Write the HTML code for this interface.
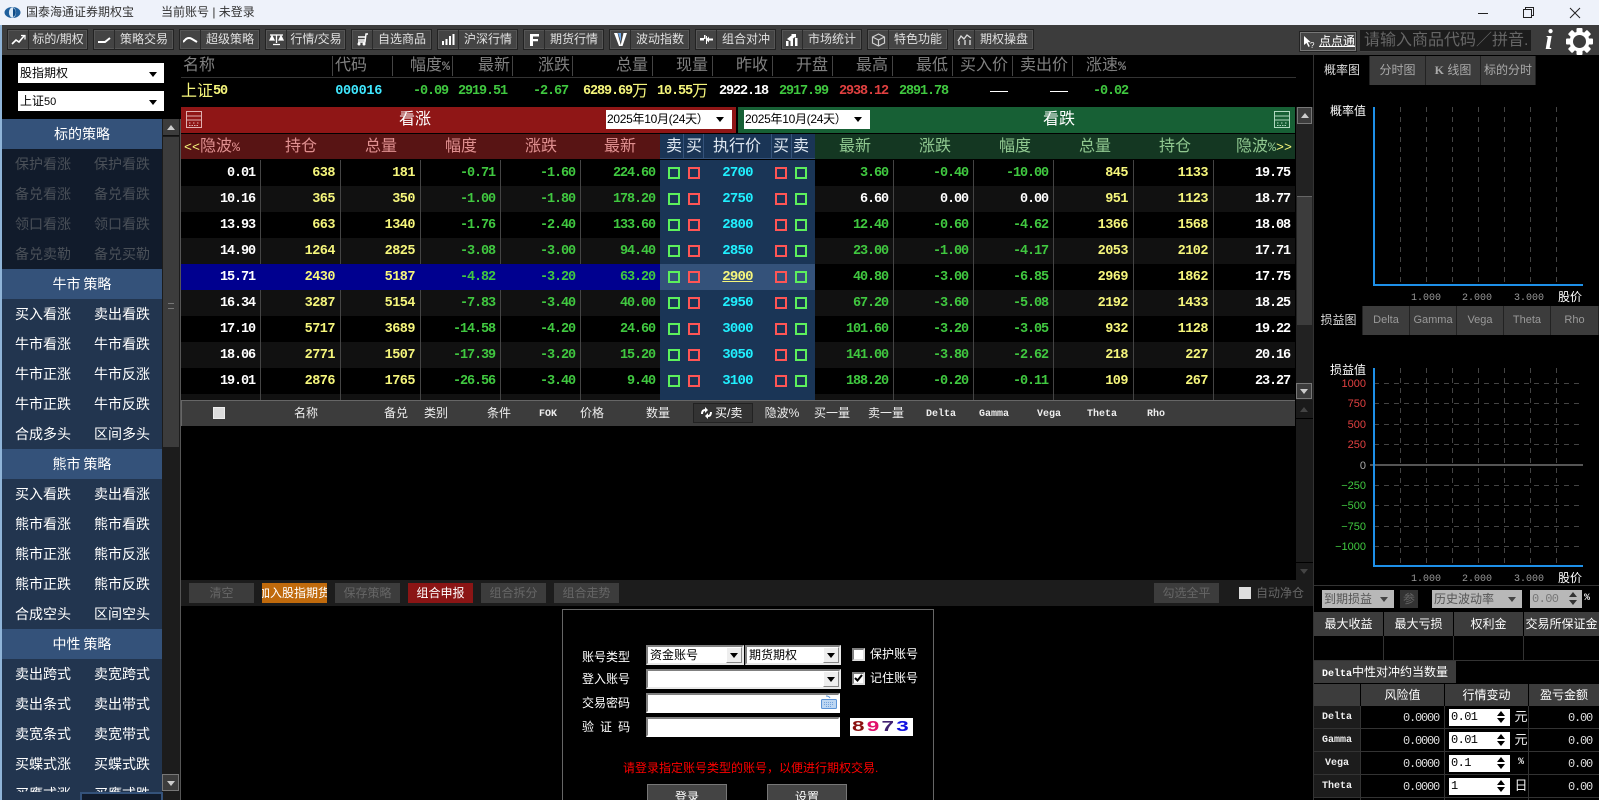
<!DOCTYPE html>
<html lang="zh"><head><meta charset="utf-8"><title>国泰海通证券期权宝</title>
<style>
html,body{margin:0;padding:0;background:#000;overflow:hidden;width:1599px;height:800px}
#w{position:relative;width:1599px;height:800px;overflow:hidden;font-family:"Liberation Sans","WenQuanYi Zen Hei","Noto Sans CJK SC",sans-serif;font-size:12px;color:#fff;background:#000}
div,span,i,b,em{box-sizing:border-box}
.a{position:absolute;white-space:nowrap}
.mo{font-family:"Liberation Mono",monospace}
.tb{position:absolute;top:29px;width:81px;height:21px;background:#444;border:1px solid #222;box-shadow:inset 0 0 0 1px #555}
.tb svg{position:absolute;left:3px;top:3px}
.tb span{position:absolute;left:20px;right:0;top:0;height:19px;line-height:19px;text-align:center;color:#e0e0e0;border-left:1px solid #2a2a2a;font-size:12px;white-space:nowrap}
.sel{position:absolute;background:#fff;color:#000;line-height:20px;padding-left:2px;overflow:hidden;white-space:nowrap;font-size:12px}
.tri{position:absolute;width:0;height:0;border-left:4.5px solid transparent;border-right:4.5px solid transparent;border-top:5px solid #000}
.h{position:absolute;left:2px;width:160px;height:30px;background:#34527a;text-align:center;line-height:30px;font-size:14px;color:#fff;word-spacing:-1px}
.l{position:absolute;left:2px;width:160px;height:30px;background:#22354f;line-height:30px;color:#fff;font-size:14px;overflow:hidden}
.l.d{background:#111b2b;color:#4a5058}
.l span{position:absolute;top:0}
.l span:first-child{left:13px}.l span:last-child{left:92px}
.q{position:absolute;top:56px;color:#808080;font-size:16px;line-height:20px;white-space:nowrap}
.q b{font:bold 13.3px/20px "Liberation Mono",monospace}
.v{position:absolute;top:82px;height:20px;display:flex;align-items:center;font:bold 13.5px/20px "Liberation Mono",monospace;letter-spacing:-1.1px;white-space:nowrap}
.v u{font:16px/16px "Liberation Sans","WenQuanYi Zen Hei",sans-serif;text-decoration:none;letter-spacing:0}
.sp{position:absolute;top:56px;width:1px;height:20px;background:#444}
.gr{color:#40c840}.ye{color:#f6f67c}.wh{color:#fff}.cy{color:#40e8ff}.rd{color:#e04040}
.ch{position:absolute;top:134px;height:25px;line-height:25px;font-size:16px;white-space:nowrap}
.ch .mo{font-size:13.3px}
.row{position:absolute;left:181px;width:1114px;height:26px;display:flex;background:#000}
.row.o{background:#111}
.row span{display:block;flex:none;width:80px;height:26px;text-align:right;padding-right:5px;border-right:1px solid #444;font:bold 13.5px/27px "Liberation Mono",monospace;letter-spacing:-1.1px;color:#40c840;white-space:nowrap}
.row span:nth-child(1),.row span:nth-child(13){color:#fff}
.row span:nth-child(2),.row span:nth-child(3),.row span:nth-child(11),.row span:nth-child(12){color:#f6f67c;letter-spacing:-.5px}
.row span:nth-child(6){width:79px;border-right:0}
.row span:nth-child(7){width:155px;border:0;padding:0;position:relative;background:#1a3556;text-align:center;color:#20f0ff;font-size:14px;letter-spacing:-.8px}
.row span:nth-child(8){width:79px}
.row span:nth-child(13){width:81px;border-right:0}
.row.s span:nth-child(-n+6){background:#00008f;border-color:#00008f}
.row.s span:nth-child(7){background:#34527a;color:#f6f67c}
.row.s span:nth-child(7) em{text-decoration:underline}
.row em{font-style:normal}
.row i{position:absolute;top:7px;width:12px;height:12px;border:2px solid #5cf05c}
.row i.r{border-color:#ff5555}
.pl{position:absolute;top:403px;height:20px;line-height:20px;font-size:12px;color:#eee;white-space:nowrap;transform:translateX(-50%)}
.pl.m{font:10px/24px "Liberation Mono",monospace;font-weight:bold}
.btn{position:absolute;top:583px;width:65px;height:20px;background:#3c3c3c;color:#666;text-align:center;line-height:20px;font-size:12px;overflow:hidden;white-space:nowrap}
.lb{position:absolute;left:582px;line-height:20px;font-size:12px;white-space:nowrap;color:#fff}
.ws{position:absolute;background:#fff;border:2px solid #e8e8e8;border-top-color:#808080;border-left-color:#808080;color:#000;line-height:16px;padding-left:2px;white-space:nowrap;font-size:12px}
.dd{position:absolute;right:0;top:0;width:16px;height:16px;background:#eee;border:1px solid #888;border-top-color:#fff;border-left-color:#fff}
.dd::after{content:"";position:absolute;left:3px;top:5px;border-left:4px solid transparent;border-right:4px solid transparent;border-top:5px solid #000}
.cb{position:absolute;width:13px;height:13px;background:#fff;border:2px solid #808080;border-right-color:#ddd;border-bottom-color:#ddd}
.tab{position:absolute;height:29px;background:#3c3c3c;border-right:1px solid #222;color:#aaa;text-align:center;line-height:29px;font-size:12px;white-space:nowrap}
.tab.e{font-size:11px;color:#999}
.cell{position:absolute;background:#3c3c3c;text-align:center;color:#fff;font-size:12px;white-space:nowrap;overflow:hidden}
.rl{position:absolute;left:1314px;width:46px;height:22px;background:#1c1c1c;color:#eee;text-align:center;font:10px/24px "Liberation Mono",monospace;font-weight:bold}
.nm{position:absolute;text-align:right;font:12px/24px "Liberation Mono",monospace;letter-spacing:-1.2px;color:#ddd}
.in{position:absolute;left:1449px;width:61px;height:17px;background:#fff;color:#000;font:12px/17px "Liberation Mono",monospace;padding-left:2px;letter-spacing:-.6px}
.in::before{content:"";position:absolute;right:5px;top:2px;border-left:4px solid transparent;border-right:4px solid transparent;border-bottom:5px solid #000}
.in::after{content:"";position:absolute;right:5px;top:9px;border-left:4px solid transparent;border-right:4px solid transparent;border-top:5px solid #000}
.un{position:absolute;left:1514px;width:14px;text-align:center;font-size:13px;line-height:22px;color:#eee}
svg.o{position:absolute;left:0;top:0}
</style></head><body><div id="w">

<!-- title bar -->
<div class="a" style="left:0;top:0;width:1599px;height:25px;background:#eef2fa"></div>
<svg class="a" style="left:4px;top:6px" width="17" height="13" viewBox="0 0 17 13"><ellipse cx="8.5" cy="6.5" rx="8" ry="5.5" fill="#1f5f9c"/><ellipse cx="8.5" cy="6.5" rx="3.6" ry="5.2" fill="#dbe9f6"/><path d="M9 2 a5 5 0 0 1 0 9z" fill="#0d4a86"/></svg>
<div class="a" style="left:26px;top:4px;font-size:12px;line-height:17px;color:#333">国泰海通证券期权宝</div>
<div class="a" style="left:161px;top:4px;font-size:12px;line-height:17px;color:#333">当前账号 | 未登录</div>
<svg class="a" style="left:1478px;top:6px" width="110" height="14" viewBox="0 0 110 14" fill="none" stroke="#222" stroke-width="1"><path d="M0 7.5h10"/><path d="M45.5 3.5h8v8h-8zM47.5 3.500v-2h8v8h-2"/><path d="M92 2l10 10M102 2l-10 10"/></svg>

<!-- toolbar -->
<div class="a" style="left:0;top:25px;width:1599px;height:30px;background:#3c3c3c"></div>
<div class="tb" style="left:7px"><svg width="15" height="13" viewBox="0 0 15 13" fill="none" stroke="#fff" stroke-width="1.6"><path d="M1 11l4-4 3 2 5-6"/><path d="M10 2.500h4v4" stroke-width="1.2"/></svg><span>标的/期权</span></div>
<div class="tb" style="left:93px"><svg width="15" height="13" viewBox="0 0 15 13" fill="none" stroke="#fff" stroke-width="2"><path d="M1 9h7l5-4"/></svg><span>策略交易</span></div>
<div class="tb" style="left:179px"><svg width="15" height="13" viewBox="0 0 15 13" fill="none" stroke="#fff" stroke-width="2"><path d="M0 9l3-3q3-2 6 0l5 3"/></svg><span>超级策略</span></div>
<div class="tb" style="left:265px"><svg width="15" height="13" viewBox="0 0 15 13" fill="none" stroke="#fff" stroke-width="1.3"><path d="M1 2h13M7.500 2v8M4 11.500h7"/><path d="M1 7l2-4 2 4zM10 7l2-4 2 4z" fill="#fff"/></svg><span>行情/交易</span></div>
<div class="tb" style="left:351px"><svg width="15" height="13" viewBox="0 0 15 13" fill="none" stroke="#fff" stroke-width="1.4"><path d="M13 1h-2l-1 8H3M3 4h7M3 7h7"/><circle cx="4" cy="11" r=".8"/><circle cx="9" cy="11" r=".8"/></svg><span>自选商品</span></div>
<div class="tb" style="left:437px"><svg width="15" height="13" viewBox="0 0 15 13" fill="#fff"><rect x="1" y="8" width="2" height="4"/><rect x="4.500" y="6" width="2" height="6"/><rect x="8" y="3" width="2" height="9"/><rect x="11.500" y="1" width="2" height="11"/></svg><span>沪深行情</span></div>
<div class="tb" style="left:523px"><svg width="15" height="13" viewBox="0 0 15 13" fill="#fff"><path d="M3 1h9v2.500H6v2.500h5v2.300H6V13H3z"/></svg><span>期货行情</span></div>
<div class="tb" style="left:609px"><svg width="15" height="13" viewBox="0 0 15 13"><path d="M1 0h4l3 9V0z" fill="#6fa8e8"/><path d="M14 0h-3.500L7.500 13h2z" fill="#fff"/><path d="M1 0h3.500L8 13H6z" fill="#fff"/></svg><span>波动指数</span></div>
<div class="tb" style="left:695px"><svg width="15" height="13" viewBox="0 0 15 13" fill="#fff"><path d="M1 5h4V2h1.500v4H5v1.500H1zM7 6.500l3-3v2h4v2h-4v2z"/><rect x="7" y="3" width="1" height="8"/></svg><span>组合对冲</span></div>
<div class="tb" style="left:781px"><svg width="15" height="13" viewBox="0 0 15 13" fill="#fff"><rect x="1" y="8" width="2.500" height="5"/><rect x="5.500" y="6" width="2.500" height="7"/><rect x="10" y="5" width="2.500" height="8"/><path d="M2 6l5-4-1-1h5v4l-1-1-5 4z"/></svg><span>市场统计</span></div>
<div class="tb" style="left:867px"><svg width="15" height="14" viewBox="0 0 15 14" fill="none" stroke="#cfcfcf" stroke-width="1.200"><path d="M7.500 1l6 3v6l-6 3-6-3V4zM1.500 4l6 3 6-3M7.500 7v6"/></svg><span>特色功能</span></div>
<div class="tb" style="left:953px"><svg width="15" height="13" viewBox="0 0 15 13" fill="none" stroke="#ddd" stroke-width="1.300"><path d="M1 8l3-5 3 3 3-4 4 3M2 12V8M8 12V7M13 12V7"/></svg><span>期权操盘</span></div>

<div class="a" style="left:1299px;top:31px;width:58px;height:21px;background:#444;border:1px solid #222;box-shadow:inset 0 0 0 1px #777;line-height:19px;font-size:12px;color:#fff;padding-left:19px"><u>点点通</u></div>
<svg class="a" style="left:1303px;top:35px" width="13" height="14" viewBox="0 0 13 14"><path d="M1 1v9l2.500-2 2 4 1.300-.7-2-4h3z" fill="#fff"/><text x="7" y="13" font-size="8" fill="#fff" font-family="Liberation Sans">?</text></svg>
<div class="a" style="left:1360px;top:30px;width:171px;height:22px;background:#1c1c1c;border-bottom:1px solid #444;color:#666;font-size:16px;line-height:22px;padding-left:4px;overflow:hidden">请输入商品代码／拼音.</div>
<div class="a" style="left:1545px;top:27px;font:italic bold 28px/28px 'Liberation Serif',serif;color:#fff">i</div>
<svg class="a" style="left:1565px;top:27px" width="29" height="29" viewBox="0 0 29 29"><g fill="#fff"><circle cx="14.500" cy="14.500" r="10"/><rect x="11.500" y="1" width="6" height="27" rx="1"/><rect x="11.500" y="1" width="6" height="27" rx="1" transform="rotate(45 14.500 14.500)"/><rect x="11.500" y="1" width="6" height="27" rx="1" transform="rotate(90 14.500 14.500)"/><rect x="11.500" y="1" width="6" height="27" rx="1" transform="rotate(135 14.500 14.500)"/></g><circle cx="14.500" cy="14.500" r="6.500" fill="#3c3c3c"/></svg>

<!-- left border & selects -->
<div class="a" style="left:0;top:25px;width:2px;height:775px;background:#8fb4d8"></div>
<div class="sel" style="left:18px;top:63px;width:146px;height:20px">股指期权<i class="tri" style="right:7px;top:9px"></i></div>
<div class="sel" style="left:18px;top:91px;width:146px;height:20px">上证<span style="font-size:11px">50</span><i class="tri" style="right:7px;top:9px"></i></div>

<!-- strategy list -->
<div class="h" style="top:119px">标的策略</div>
<div class="l d" style="top:149px"><span>保护看涨</span><span>保护看跌</span></div>
<div class="l d" style="top:179px"><span>备兑看涨</span><span>备兑看跌</span></div>
<div class="l d" style="top:209px"><span>领口看涨</span><span>领口看跌</span></div>
<div class="l d" style="top:239px"><span>备兑卖勒</span><span>备兑买勒</span></div>
<div class="h" style="top:269px">牛市 策略</div>
<div class="l" style="top:299px"><span>买入看涨</span><span>卖出看跌</span></div>
<div class="l" style="top:329px"><span>牛市看涨</span><span>牛市看跌</span></div>
<div class="l" style="top:359px"><span>牛市正涨</span><span>牛市反涨</span></div>
<div class="l" style="top:389px"><span>牛市正跌</span><span>牛市反跌</span></div>
<div class="l" style="top:419px"><span>合成多头</span><span>区间多头</span></div>
<div class="h" style="top:449px">熊市 策略</div>
<div class="l" style="top:479px"><span>买入看跌</span><span>卖出看涨</span></div>
<div class="l" style="top:509px"><span>熊市看涨</span><span>熊市看跌</span></div>
<div class="l" style="top:539px"><span>熊市正涨</span><span>熊市反涨</span></div>
<div class="l" style="top:569px"><span>熊市正跌</span><span>熊市反跌</span></div>
<div class="l" style="top:599px"><span>合成空头</span><span>区间空头</span></div>
<div class="h" style="top:629px">中性 策略</div>
<div class="l" style="top:659px"><span>卖出跨式</span><span>卖宽跨式</span></div>
<div class="l" style="top:689px"><span>卖出条式</span><span>卖出带式</span></div>
<div class="l" style="top:719px"><span>卖宽条式</span><span>卖宽带式</span></div>
<div class="l" style="top:749px"><span>买蝶式涨</span><span>买蝶式跌</span></div>
<div class="l" style="top:779px;height:13px"><span>买鹰式涨</span><span>买鹰式跌</span></div>
<div class="a" style="left:2px;top:792px;width:160px;height:8px;background:#22354f"></div>

<!-- left scrollbar -->
<div class="a" style="left:162px;top:119px;width:19px;height:681px;background:#1c1c1c;border-right:1px solid #555"></div>
<div class="a" style="left:163px;top:119px;width:16px;height:17px;background:#3c3c3c;border-bottom:1px solid #111"></div>
<i class="a" style="left:167px;top:125px;border-left:4px solid transparent;border-right:4px solid transparent;border-bottom:5px solid #ccc"></i>
<div class="a" style="left:163px;top:137px;width:16px;height:310px;background:#3c3c3c"></div>
<div class="a" style="left:168px;top:303px;width:6px;height:6px;border-top:1px solid #777;border-bottom:1px solid #777"></div>
<div class="a" style="left:162px;top:774px;width:17px;height:17px;background:#3c3c3c;border:1px solid #777"></div>
<i class="a" style="left:167px;top:781px;border-left:4px solid transparent;border-right:4px solid transparent;border-top:5px solid #ccc"></i>
<div class="a" style="left:80px;top:792px;width:83px;height:8px;background:#111b2b;border:2px solid #34527a;border-bottom:0"></div>

<!-- quote header -->
<div class="a" style="left:181px;top:77px;width:1115px;height:1px;background:#333"></div>
<div class="q" style="left:183px">名称</div>
<div class="q" style="left:335px">代码</div>
<div class="q" style="right:1149px">幅度<b>%</b></div>
<div class="q" style="right:1089px">最新</div>
<div class="q" style="right:1029px">涨跌</div>
<div class="q" style="right:951px">总量</div>
<div class="q" style="right:891px">现量</div>
<div class="q" style="right:831px">昨收</div>
<div class="q" style="right:771px">开盘</div>
<div class="q" style="right:711px">最高</div>
<div class="q" style="right:651px">最低</div>
<div class="q" style="right:591px">买入价</div>
<div class="q" style="right:531px">卖出价</div>
<div class="q" style="left:1086px">涨速<b>%</b></div>
<i class="sp" style="left:332px"></i><i class="sp" style="left:392px"></i><i class="sp" style="left:452px"></i><i class="sp" style="left:512px"></i><i class="sp" style="left:572px"></i><i class="sp" style="left:652px"></i><i class="sp" style="left:712px"></i><i class="sp" style="left:772px"></i><i class="sp" style="left:832px"></i><i class="sp" style="left:892px"></i><i class="sp" style="left:952px"></i><i class="sp" style="left:1012px"></i><i class="sp" style="left:1072px"></i>

<div class="v ye" style="left:181px"><u>上证</u>50</div>
<div class="v cy" style="right:1217px;letter-spacing:-.3px">000016</div>
<div class="v gr" style="right:1151px">-0.09</div>
<div class="v gr" style="right:1092px">2919.51</div>
<div class="v gr" style="right:1031px">-2.67</div>
<div class="v ye" style="right:951px">6289.69<u>万</u></div>
<div class="v ye" style="right:891px">10.55<u>万</u></div>
<div class="v wh" style="right:831px">2922.18</div>
<div class="v gr" style="right:771px">2917.99</div>
<div class="v rd" style="right:711px">2938.12</div>
<div class="v gr" style="right:651px">2891.78</div>
<div class="a" style="left:990px;top:91px;width:18px;height:1px;background:#fff"></div>
<div class="a" style="left:1050px;top:91px;width:18px;height:1px;background:#fff"></div>
<div class="v gr" style="right:471px">-0.02</div>

<!-- call / put head -->
<div class="a" style="left:181px;top:107px;width:555px;height:26px;background:#8f1616;text-align:center;line-height:26px;font-size:16px"><span style="position:absolute;left:218px">看涨</span></div>
<div class="a" style="left:738px;top:107px;width:557px;height:26px;background:#176035;line-height:26px;font-size:16px"><span style="position:absolute;left:305px">看跌</span></div>
<svg class="a" style="left:186px;top:111px" width="17" height="18" viewBox="0 0 17 18" fill="none" stroke="#e0b0b0" stroke-width="1"><rect x=".5" y=".5" width="15" height="16"/><path d="M.5 5h15M.5 9h15"/><path d="M3 12h2M7 12h2M11 12h2M3 14.500h10" stroke-dasharray="1.500 1"/></svg>
<svg class="a" style="left:1274px;top:111px" width="17" height="18" viewBox="0 0 17 18" fill="none" stroke="#b0d8c0" stroke-width="1"><rect x=".5" y=".5" width="15" height="16"/><path d="M.5 5h15M.5 9h15"/><path d="M3 12h2M7 12h2M11 12h2M3 14.500h10" stroke-dasharray="1.500 1"/></svg>
<div class="sel" style="left:606px;top:110px;width:126px;height:19px;font-size:12px;line-height:19px;padding-left:1px;letter-spacing:-.3px">2025年10月(24天）<i class="tri" style="right:8px;top:7px"></i></div>
<div class="sel" style="left:744px;top:110px;width:126px;height:19px;font-size:12px;line-height:19px;padding-left:1px;letter-spacing:-.3px">2025年10月(24天）<i class="tri" style="right:8px;top:7px"></i></div>

<!-- column headers -->
<div class="a" style="left:181px;top:134px;width:479px;height:25px;background:#581414"></div>
<div class="a" style="left:660px;top:134px;width:155px;height:25px;background:#1a3556;border-bottom:1px solid #34527a"></div>
<div class="a" style="left:815px;top:134px;width:480px;height:25px;background:#143722"></div>
<div class="ch" style="left:184px;color:#e09090"><span class="mo" style="color:#f6f67c">&lt;&lt;</span>隐波<span class="mo">%</span></div>
<div class="ch" style="left:285px;color:#e09090">持仓</div>
<div class="ch" style="left:365px;color:#e09090">总量</div>
<div class="ch" style="left:445px;color:#e09090">幅度</div>
<div class="ch" style="left:525px;color:#e09090">涨跌</div>
<div class="ch" style="left:604px;color:#e09090">最新</div>
<div class="ch" style="left:666px;color:#dfe8f2">卖</div><div class="ch" style="left:686px;color:#dfe8f2">买</div>
<div class="ch" style="left:713px;color:#dfe8f2">执行价</div>
<div class="ch" style="left:773px;color:#dfe8f2">买</div><div class="ch" style="left:793px;color:#dfe8f2">卖</div>
<i class="a" style="left:683px;top:134px;width:1px;height:25px;background:#34527a"></i><i class="a" style="left:703px;top:134px;width:1px;height:25px;background:#34527a"></i><i class="a" style="left:771px;top:134px;width:1px;height:25px;background:#34527a"></i><i class="a" style="left:791px;top:134px;width:1px;height:25px;background:#34527a"></i>
<div class="ch" style="left:839px;color:#90c890">最新</div>
<div class="ch" style="left:919px;color:#90c890">涨跌</div>
<div class="ch" style="left:999px;color:#90c890">幅度</div>
<div class="ch" style="left:1079px;color:#90c890">总量</div>
<div class="ch" style="left:1159px;color:#90c890">持仓</div>
<div class="ch" style="left:1236px;color:#90c890">隐波<span class="mo">%</span><span class="mo" style="color:#f6f67c">&gt;&gt;</span></div>

<!-- rows -->
<div class="row" style="top:160px"><span>0.01</span><span>638</span><span>181</span><span>-0.71</span><span>-1.60</span><span>224.60</span><span><i style="left:8px"></i><i class="r" style="left:28px"></i><em>2700</em><i class="r" style="left:115px"></i><i style="left:135px"></i></span><span>3.60</span><span>-0.40</span><span>-10.00</span><span>845</span><span>1133</span><span>19.75</span></div>
<div class="row o" style="top:186px"><span>10.16</span><span>365</span><span>350</span><span>-1.00</span><span>-1.80</span><span>178.20</span><span><i style="left:8px"></i><i class="r" style="left:28px"></i><em>2750</em><i class="r" style="left:115px"></i><i style="left:135px"></i></span><span style="color:#fff">6.60</span><span style="color:#fff">0.00</span><span style="color:#fff">0.00</span><span>951</span><span>1123</span><span>18.77</span></div>
<div class="row" style="top:212px"><span>13.93</span><span>663</span><span>1340</span><span>-1.76</span><span>-2.40</span><span>133.60</span><span><i style="left:8px"></i><i class="r" style="left:28px"></i><em>2800</em><i class="r" style="left:115px"></i><i style="left:135px"></i></span><span>12.40</span><span>-0.60</span><span>-4.62</span><span>1366</span><span>1568</span><span>18.08</span></div>
<div class="row o" style="top:238px"><span>14.90</span><span>1264</span><span>2825</span><span>-3.08</span><span>-3.00</span><span>94.40</span><span><i style="left:8px"></i><i class="r" style="left:28px"></i><em>2850</em><i class="r" style="left:115px"></i><i style="left:135px"></i></span><span>23.00</span><span>-1.00</span><span>-4.17</span><span>2053</span><span>2102</span><span>17.71</span></div>
<div class="row s" style="top:264px"><span>15.71</span><span>2430</span><span>5187</span><span>-4.82</span><span>-3.20</span><span>63.20</span><span><i style="left:8px"></i><i class="r" style="left:28px"></i><em>2900</em><i class="r" style="left:115px"></i><i style="left:135px"></i></span><span>40.80</span><span>-3.00</span><span>-6.85</span><span>2969</span><span>1862</span><span>17.75</span></div>
<div class="row o" style="top:290px"><span>16.34</span><span>3287</span><span>5154</span><span>-7.83</span><span>-3.40</span><span>40.00</span><span><i style="left:8px"></i><i class="r" style="left:28px"></i><em>2950</em><i class="r" style="left:115px"></i><i style="left:135px"></i></span><span>67.20</span><span>-3.60</span><span>-5.08</span><span>2192</span><span>1433</span><span>18.25</span></div>
<div class="row" style="top:316px"><span>17.10</span><span>5717</span><span>3689</span><span>-14.58</span><span>-4.20</span><span>24.60</span><span><i style="left:8px"></i><i class="r" style="left:28px"></i><em>3000</em><i class="r" style="left:115px"></i><i style="left:135px"></i></span><span>101.60</span><span>-3.20</span><span>-3.05</span><span>932</span><span>1128</span><span>19.22</span></div>
<div class="row o" style="top:342px"><span>18.06</span><span>2771</span><span>1507</span><span>-17.39</span><span>-3.20</span><span>15.20</span><span><i style="left:8px"></i><i class="r" style="left:28px"></i><em>3050</em><i class="r" style="left:115px"></i><i style="left:135px"></i></span><span>141.00</span><span>-3.80</span><span>-2.62</span><span>218</span><span>227</span><span>20.16</span></div>
<div class="row" style="top:368px"><span>19.01</span><span>2876</span><span>1765</span><span>-26.56</span><span>-3.40</span><span>9.40</span><span><i style="left:8px"></i><i class="r" style="left:28px"></i><em>3100</em><i class="r" style="left:115px"></i><i style="left:135px"></i></span><span>188.20</span><span>-0.20</span><span>-0.11</span><span>109</span><span>267</span><span>23.27</span></div>
<div class="row o" style="top:394px;height:6px;overflow:hidden"><span></span><span></span><span></span><span></span><span></span><span></span><span></span><span></span><span></span><span></span><span></span><span></span><span></span></div>

<!-- main scrollbar -->
<div class="a" style="left:1296px;top:107px;width:17px;height:293px;background:#222"></div>
<div class="a" style="left:1297px;top:107px;width:15px;height:17px;background:#3c3c3c;border:1px solid #777"></div>
<i class="a" style="left:1301px;top:113px;border-left:4px solid transparent;border-right:4px solid transparent;border-bottom:5px solid #ccc"></i>
<div class="a" style="left:1297px;top:196px;width:15px;height:129px;background:#3c3c3c;border-top:1px solid #666"></div>
<div class="a" style="left:1296px;top:383px;width:16px;height:16px;background:#3c3c3c;border:1px solid #777"></div>
<i class="a" style="left:1300px;top:389px;border-left:4px solid transparent;border-right:4px solid transparent;border-top:5px solid #ccc"></i>

<!-- order panel -->
<div class="a" style="left:181px;top:400px;width:1114px;height:26px;background:#3c3c3c;border-top:1px solid #666;border-left:1px solid #666"></div>
<div class="a" style="left:213px;top:407px;width:12px;height:12px;background:#ddd;border:1px solid #eee"></div>
<div class="pl" style="left:306px">名称</div><div class="pl" style="left:396px">备兑</div><div class="pl" style="left:436px">类别</div><div class="pl" style="left:499px">条件</div>
<div class="pl m" style="left:548px">FOK</div><div class="pl" style="left:592px">价格</div><div class="pl" style="left:658px">数量</div>
<div class="a" style="left:693px;top:403px;width:60px;height:20px;background:#333;border:1px solid #222;line-height:18px;font-size:12px;color:#fff;padding-left:21px">买/卖</div>
<svg class="a" style="left:700px;top:407px" width="13" height="12" viewBox="0 0 13 12" fill="#fff"><path d="M1 7Q1 2 5 2V0l3 3-3 3V4Q3 4 3 7zM12 5q0 5-4 5v2L5 9l3-3v2q2 0 2-3z"/></svg>
<div class="pl" style="left:782px">隐波%</div><div class="pl" style="left:832px">买一量</div><div class="pl" style="left:886px">卖一量</div>
<div class="pl m" style="left:941px">Delta</div><div class="pl m" style="left:994px">Gamma</div><div class="pl m" style="left:1049px">Vega</div><div class="pl m" style="left:1102px">Theta</div><div class="pl m" style="left:1156px">Rho</div>

<div class="a" style="left:1296px;top:400px;width:17px;height:180px;background:#1a1a1a"></div>
<i class="a" style="left:1300px;top:407px;border-left:4px solid transparent;border-right:4px solid transparent;border-bottom:5px solid #444"></i>
<div class="a" style="left:1296px;top:418px;width:17px;height:1px;background:#000"></div>
<div class="a" style="left:1296px;top:562px;width:17px;height:1px;background:#000"></div>
<i class="a" style="left:1300px;top:569px;border-left:4px solid transparent;border-right:4px solid transparent;border-top:5px solid #444"></i>

<!-- buttons bar -->
<div class="a" style="left:181px;top:580px;width:1132px;height:26px;background:#1c1c1c"></div>
<div class="btn" style="left:189px">清空</div>
<div class="btn" style="left:262px;background:#c06a0c;color:#fff"><span style="position:absolute;left:-4px;top:0">加入股指期货</span></div>
<div class="btn" style="left:335px">保存策略</div>
<div class="btn" style="left:408px;background:#8b1515;color:#fff">组合申报</div>
<div class="btn" style="left:481px">组合拆分</div>
<div class="btn" style="left:554px">组合走势</div>
<div class="btn" style="left:1154px">勾选全平</div>
<div class="a" style="left:1239px;top:587px;width:12px;height:12px;background:#ddd"></div>
<div class="a" style="left:1256px;top:583px;line-height:20px;font-size:12px;color:#666">自动净仓</div>

<!-- login -->
<div class="a" style="left:562px;top:609px;width:372px;height:195px;border:1px solid #666"></div>
<div class="lb" style="top:647px">账号类型</div><div class="lb" style="top:669px">登入账号</div><div class="lb" style="top:693px">交易密码</div><div class="lb" style="top:717px;word-spacing:2.700px">验 证 码</div>
<div class="ws" style="left:646px;top:645px;width:98px;height:20px">资金账号<i class="dd"></i></div>
<div class="ws" style="left:745px;top:645px;width:96px;height:20px">期货期权<i class="dd"></i></div>
<div class="ws" style="left:646px;top:669px;width:195px;height:20px"><i class="dd"></i></div>
<div class="ws" style="left:646px;top:693px;width:194px;height:20px;border-color:#808080 #fff #fff #808080"></div>
<svg class="a" style="left:821px;top:695px" width="17" height="16" viewBox="0 0 17 16" fill="#bcd6f2" stroke="#5b93d6"><path d="M9 3 Q8 1 5 1" fill="none"/><rect x=".5" y="4.500" width="15" height="9" rx="1"/><path d="M3 7.500h10M3 9.500h10M5 11.500h6" stroke-width=".8" stroke-dasharray="1 1"/></svg>
<div class="ws" style="left:646px;top:717px;width:194px;height:20px;border-color:#808080 #fff #fff #808080"></div>
<div class="cb" style="left:852px;top:648px"></div><div class="lb" style="left:870px;top:644px">保护账号</div>
<div class="cb" style="left:852px;top:672px"></div>
<svg class="a" style="left:854px;top:674px" width="9" height="9" viewBox="0 0 9 9"><path d="M1 4l2.500 2.500L8 1" fill="none" stroke="#000" stroke-width="2"/></svg>
<div class="lb" style="left:870px;top:668px">记住账号</div>
<div class="a" style="left:850px;top:718px;width:63px;height:18px;background:#fff;overflow:hidden"><div class="a" style="left:2px;top:0;font:bold 15px/18px 'Liberation Sans',sans-serif;letter-spacing:1.500px;transform:scaleX(1.5);transform-origin:left"><span style="color:#8b1010">8</span><span style="color:#e0106a">9</span><span style="color:#402070">7</span><span style="color:#1010e0">3</span></div></div>
<div class="a" style="left:623px;top:758px;line-height:20px;color:#f00;font-size:12px">请登录指定账号类型的账号，以便进行期权交易.</div>
<div class="a" style="left:647px;top:784px;width:80px;height:26px;background:#444;border:1px solid #777;text-align:center;line-height:24px;font-size:12px">登录</div>
<div class="a" style="left:767px;top:784px;width:80px;height:26px;background:#444;border:1px solid #777;text-align:center;line-height:24px;font-size:12px">设置</div>

<!-- right panel -->
<div class="a" style="left:1313px;top:55px;width:1px;height:745px;background:#333"></div>
<div class="tab" style="left:1315px;top:56px;width:55px;background:#000;color:#ddd">概率图</div>
<div class="tab" style="left:1370px;top:56px;width:56px">分时图</div>
<div class="tab" style="left:1426px;top:56px;width:55px"><b style="font-family:'Liberation Serif'">K</b> 线图</div>
<div class="tab" style="left:1481px;top:56px;width:55px">标的分时</div>

<div class="tab" style="left:1315px;top:306px;width:48px;background:#000;color:#ddd">损益图</div>
<div class="tab e" style="left:1363px;top:306px;width:47px">Delta</div>
<div class="tab e" style="left:1410px;top:306px;width:47px">Gamma</div>
<div class="tab e" style="left:1457px;top:306px;width:47px">Vega</div>
<div class="tab e" style="left:1504px;top:306px;width:47px">Theta</div>
<div class="tab e" style="left:1551px;top:306px;width:48px">Rho</div>

<svg class="o" width="1599" height="800" viewBox="0 0 1599 800" style="pointer-events:none">
<g stroke="#444" stroke-dasharray="5 5" fill="none">
<path d="M1400.500 107V285M1426.500 107V285M1452.500 107V285M1478.500 107V285M1504.500 107V285M1530.500 107V285M1556.500 107V285"/>
<path d="M1400.500 368V566M1426.500 368V566M1452.500 368V566M1478.500 368V566M1504.500 368V566M1530.500 368V566M1556.500 368V566"/>
<path d="M1374 383.500H1582M1374 403.500H1582M1374 424.500H1582M1374 444.500H1582M1374 485.500H1582M1374 505.500H1582M1374 526.500H1582M1374 546.500H1582"/>
</g>
<path d="M1370 465H1583" stroke="#555" stroke-width="2"/>
<path d="M1374 107V285H1583M1374 368V566H1583" stroke="#1e90e8" stroke-width="2" fill="none"/>
<g font-family="Liberation Sans,WenQuanYi Zen Hei,sans-serif" font-size="12" fill="#fff" text-anchor="end">
<text x="1366" y="115">概率值</text><text x="1366" y="374">损益值</text>
</g>
<g font-family="Liberation Sans,sans-serif" font-size="11" text-anchor="end">
<g fill="#e04040"><text x="1366" y="387">1000</text><text x="1366" y="407">750</text><text x="1366" y="428">500</text><text x="1366" y="448">250</text></g>
<text x="1366" y="469" fill="#aaa">0</text>
<g fill="#40c840"><text x="1366" y="489">−250</text><text x="1366" y="509">−500</text><text x="1366" y="530">−750</text><text x="1366" y="550">−1000</text></g>
</g>
<g font-family="Liberation Mono,monospace" font-size="10" fill="#999" text-anchor="middle">
<text x="1426" y="300">1.000</text><text x="1477" y="300">2.000</text><text x="1529" y="300">3.000</text>
<text x="1426" y="581">1.000</text><text x="1477" y="581">2.000</text><text x="1529" y="581">3.000</text>
</g>
<g font-family="Liberation Sans,WenQuanYi Zen Hei,sans-serif" font-size="12" fill="#fff">
<text x="1558" y="301">股价</text><text x="1558" y="582">股价</text>
</g>
</svg>

<!-- controls -->
<div class="a" style="left:1314px;top:585px;width:285px;height:1px;background:#333"></div>
<div class="a" style="left:1322px;top:590px;width:72px;height:18px;background:#b8b8b8;color:#555;font-size:12px;line-height:18px;padding-left:2px">到期损益<i class="tri" style="right:6px;top:7px;border-top-color:#444"></i></div>
<div class="a" style="left:1400px;top:590px;width:18px;height:18px;background:#333;color:#666;font-size:12px;line-height:18px;text-align:center">参</div>
<div class="a" style="left:1432px;top:590px;width:90px;height:18px;background:#b8b8b8;color:#555;font-size:12px;line-height:18px;padding-left:2px">历史波动率<i class="tri" style="right:6px;top:7px;border-top-color:#444"></i></div>
<div class="a" style="left:1530px;top:590px;width:52px;height:18px;background:#b8b8b8;color:#777;font:12px/18px 'Liberation Mono',monospace;padding-left:2px;letter-spacing:-.6px">0.00</div>
<i class="a" style="left:1569px;top:592px;border-left:4px solid transparent;border-right:4px solid transparent;border-bottom:5px solid #333"></i>
<i class="a" style="left:1569px;top:600px;border-left:4px solid transparent;border-right:4px solid transparent;border-top:5px solid #333"></i>
<div class="a" style="left:1584px;top:590px;font:bold 10px/18px 'Liberation Mono',monospace;color:#eee">%</div>

<div class="cell" style="left:1314px;top:612px;width:69px;height:24px;line-height:24px">最大收益</div>
<div class="cell" style="left:1384px;top:612px;width:69px;height:24px;line-height:24px">最大亏损</div>
<div class="cell" style="left:1454px;top:612px;width:69px;height:24px;line-height:24px">权利金</div>
<div class="cell" style="left:1524px;top:612px;width:75px;height:24px;line-height:24px">交易所保证金</div>
<div class="a" style="left:1314px;top:660px;width:285px;height:1px;background:#333"></div>
<i class="a" style="left:1383px;top:636px;width:1px;height:24px;background:#333"></i><i class="a" style="left:1453px;top:636px;width:1px;height:24px;background:#333"></i><i class="a" style="left:1523px;top:636px;width:1px;height:24px;background:#333"></i>
<div class="cell" style="left:1314px;top:661px;width:142px;height:22px;line-height:22px"><span class="mo" style="font-size:10px;font-weight:bold">Delta</span>中性对冲约当数量</div>

<div class="cell" style="left:1314px;top:684px;width:46px;height:22px"></div>
<div class="cell" style="left:1361px;top:684px;width:83px;height:22px;line-height:22px">风险值</div>
<div class="cell" style="left:1445px;top:684px;width:83px;height:22px;line-height:22px">行情变动</div>
<div class="cell" style="left:1529px;top:684px;width:70px;height:22px;line-height:22px">盈亏金额</div>
<div class="a" style="left:1314px;top:728px;width:285px;height:1px;background:#333"></div>
<div class="a" style="left:1314px;top:751px;width:285px;height:1px;background:#333"></div>
<div class="a" style="left:1314px;top:774px;width:285px;height:1px;background:#333"></div>
<div class="a" style="left:1314px;top:797px;width:285px;height:1px;background:#333"></div>
<i class="a" style="left:1360px;top:706px;width:1px;height:94px;background:#333"></i><i class="a" style="left:1444px;top:706px;width:1px;height:94px;background:#333"></i><i class="a" style="left:1528px;top:706px;width:1px;height:94px;background:#333"></i>

<div class="rl" style="top:706px">Delta</div><div class="rl" style="top:729px">Gamma</div><div class="rl" style="top:752px">Vega</div><div class="rl" style="top:775px">Theta</div>
<div class="nm" style="left:1361px;width:78px;top:706px">0.0000</div><div class="nm" style="left:1361px;width:78px;top:729px">0.0000</div><div class="nm" style="left:1361px;width:78px;top:752px">0.0000</div><div class="nm" style="left:1361px;width:78px;top:775px">0.0000</div>
<div class="in" style="top:709px">0.01</div><div class="in" style="top:732px">0.01</div><div class="in" style="top:755px">0.1</div><div class="in" style="top:778px">1</div>
<div class="un" style="top:706px">元</div><div class="un" style="top:729px">元</div><div class="un" style="top:752px;font:bold 10px/22px 'Liberation Mono',monospace">%</div><div class="un" style="top:775px">日</div>
<div class="nm" style="left:1529px;width:63px;top:706px">0.00</div><div class="nm" style="left:1529px;width:63px;top:729px">0.00</div><div class="nm" style="left:1529px;width:63px;top:752px">0.00</div><div class="nm" style="left:1529px;width:63px;top:775px">0.00</div>
</div></body></html>
